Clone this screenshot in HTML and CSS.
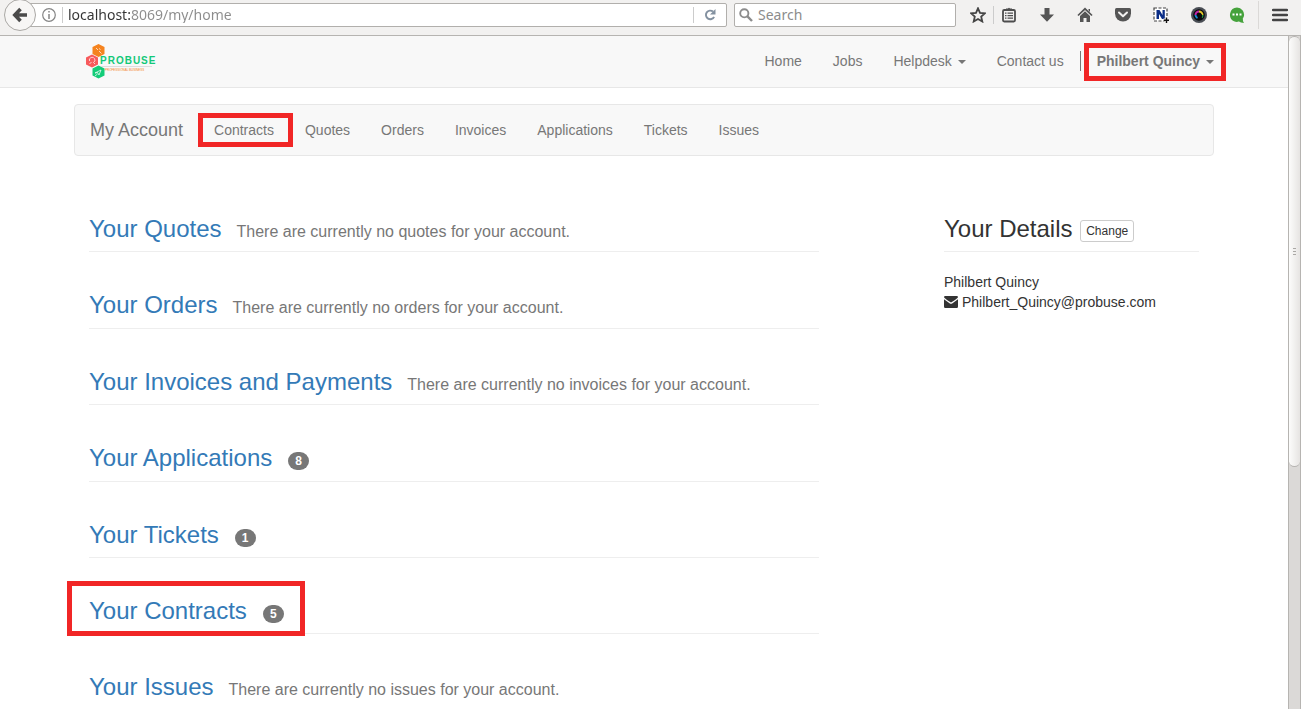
FILE: index.html
```html
<!DOCTYPE html>
<html lang="en">
<head>
<meta charset="utf-8">
<title>My Account</title>
<link rel="stylesheet" href="styles.css">
</head>
<body>
<div class="toolbar">
  <button class="back" type="button" aria-label="Back">
    <svg width="16" height="16" viewBox="0 0 16 16"><path d="M8.500 2 2.800 8l5.700 6M3.500 8H15" fill="none" stroke="#4a4a4a" stroke-width="3.600"/></svg>
  </button>
  <div class="urlbar">
    <svg class="info" width="14" height="14" viewBox="0 0 14 14"><circle cx="7" cy="7" r="6.300" fill="none" stroke="#858585" stroke-width="1.200"/><path d="M7 6v5M7 3v1.600" stroke="#858585" stroke-width="1.500"/></svg>
    <input class="url" type="text" value="localhost:8069/my/home" aria-label="Address">
    <button class="reload" type="button" aria-label="Reload">
      <svg width="12" height="12" viewBox="0 0 12 12"><path d="M9 2.600A4.300 4.300 0 1 0 10.100 7.800" fill="none" stroke="#8391a0" stroke-width="1.900"/><path d="M11.500 0v5.500H6z" fill="#8391a0"/></svg>
    </button>
  </div>
  <div class="searchbar">
    <svg width="14" height="14" viewBox="0 0 14 14"><circle cx="5.300" cy="5.300" r="4.100" fill="none" stroke="#8c8c8c" stroke-width="1.900"/><path d="m8.200 8.200 4.800 4.800" stroke="#8c8c8c" stroke-width="2.400"/></svg>
    <input class="search" type="text" placeholder="Search" aria-label="Search">
  </div>
  <div class="tools">
    <button class="tool" type="button" aria-label="Bookmark">
      <svg width="16" height="16" viewBox="0 0 16 16"><path d="m8 1.300 2 4.500 4.900.5-3.700 3.300 1.100 4.900L8 12l-4.300 2.500 1.100-4.900L1.100 6.300 6 5.800z" fill="none" stroke="#444" stroke-width="1.800"/></svg>
    </button>
    <span class="rule"></span>
    <div class="addons">
      <button class="tool" type="button" aria-label="Library">
        <svg width="16" height="16" viewBox="0 0 16 16"><rect x="2" y="3" width="12" height="11.500" rx="1.200" fill="none" stroke="#4d4d4d" stroke-width="1.800"/><path d="M5 3V1.600h2Q8 0 9 1.600h2V3z" fill="#4d4d4d"/><path d="M4 6.200h1.500m1 0H12M4 8.700h1.500m1 0H12M4 11.200h1.500m1 0H12" stroke="#4d4d4d" stroke-width="1.200"/></svg>
      </button>
      <button class="tool" type="button" aria-label="Downloads">
        <svg width="16" height="16" viewBox="0 0 16 16"><path d="M5.500 1h5v6.500H15L8 14.800 1 7.500h4.500z" fill="#555"/></svg>
      </button>
      <button class="tool" type="button" aria-label="Home page">
        <svg width="16" height="16" viewBox="0 0 16 16"><path d="M1 8.500 8 1.800l7 6.700" fill="none" stroke="#555" stroke-width="1.700"/><path d="M3 9l5-4.700L13 9v6H9.500v-4h-3v4H3zM11.500 2H13v3l-1.500-1.500z" fill="#555"/></svg>
      </button>
      <button class="tool" type="button" aria-label="Pocket">
        <svg width="16" height="16" viewBox="0 0 16 16"><path d="M1.500 1h13Q16 1 16 2.500v4a8 8 0 0 1-16 0v-4Q0 1 1.500 1z" fill="#555"/><path d="m4 5.500 4 3.800 4-3.800" fill="none" stroke="#f2f1f0" stroke-width="2" stroke-linecap="round" stroke-linejoin="round"/></svg>
      </button>
      <button class="tool" type="button" aria-label="Nimbus capture">
        <svg width="16" height="16" viewBox="0 0 16 16"><rect x="1" y="1" width="13" height="13" fill="#fff" stroke="#444" stroke-width="1.200" stroke-dasharray="3 1.500"/><path d="M3.500 12V3h3l3 5V3h2.300v9H9L6 7v5z" fill="#0b2d86"/><path d="M13.500 10v6M10.500 13h6" stroke="#f2f1f0" stroke-width="3"/><path d="M13.500 10.500V16M10.800 13.200H16" stroke="#111" stroke-width="1.400"/></svg>
      </button>
      <button class="tool" type="button" aria-label="Screen recorder">
        <svg width="16" height="16" viewBox="0 0 16 16"><circle cx="8" cy="8" r="8" fill="#4a4e55"/><circle cx="8" cy="8" r="5.800" fill="#08080c"/><path d="M4.500 8A3.500 3.500 0 0 1 8 4.500" fill="none" stroke="#c326a9" stroke-width="2"/><path d="M8 4.500A3.500 3.500 0 0 1 11.500 8" fill="none" stroke="#e2c42b" stroke-width="2"/><path d="M11.500 8a3.500 3.500 0 0 1-1 2.500" fill="none" stroke="#29a84a" stroke-width="2"/><path d="M6.500 11A3.500 3.500 0 0 1 4.500 8" fill="none" stroke="#168bd6" stroke-width="2"/><circle cx="9" cy="9" r="2.300" fill="#08080c"/></svg>
      </button>
      <button class="tool" type="button" aria-label="Chat">
        <svg width="16" height="16" viewBox="0 0 16 16"><path d="M8 .5a7.200 7.200 0 1 1-3 13.800 7.300 7.300 0 0 1 3-13.800zM9 14l5-2q-.5 2 1 4-3 0-6-2z" fill="#45a23c"/><path d="M3.500 6.500h2v2h-2zm3.500 0h2v2H7zm3.500 0h2v2h-2z" fill="#fff"/></svg>
      </button>
    </div>
    <span class="rule rule-tall"></span>
    <button class="tool" type="button" aria-label="Menu">
      <svg width="16" height="14" viewBox="0 0 16 14"><path d="M1 2h14M1 7h14M1 12h14" stroke="#444" stroke-width="2.500" stroke-linecap="round"/></svg>
    </button>
  </div>
</div>

<div class="viewport">
  <div class="page">
    <header class="site-header">
      <div class="container header-row">
        <a class="logo" href="#" aria-label="Probuse">
          <svg width="72" height="38" viewBox="0 0 72 38">
            <path d="m13.500 1 6 3v7l-6 3-6-3V4z" fill="#f5831f"/>
            <path d="m7 11.500 6 3v7l-6 3-6-3v-7z" fill="#f75a5c"/>
            <path d="m13.500 22.500 6 3v7l-6 3-6-3v-7z" fill="#13cc78"/>
            <path d="m11 5 2 2m1 1 2.500 2.500M14 5.500l1.500 1M4.500 21l2-2m-2-1a2.800 2.800 0 1 1 4 1.500L10 21M10 30l6-3-2 5-1.500-2.500zm0 3 2.500-2" fill="none" stroke="#fff" stroke-opacity=".7"/>
            <text class="logo-name" x="15" y="21">PROBUSE</text>
            <path d="M16 23.500h51" stroke="#ddd"/>
            <text class="logo-tag" x="20" y="28">PROFESSIONAL BUSINESS</text>
          </svg>
        </a>
        <nav class="site-nav">
          <a href="#">Home</a>
          <a href="#">Jobs</a>
          <a href="#">Helpdesk <span class="caret"></span></a>
          <a href="#">Contact us</a>
          <span class="divider"></span>
          <a class="marked user" href="#">Philbert Quincy <span class="caret"></span></a>
        </nav>
      </div>
    </header>

    <main class="container">
      <nav class="account-nav">
        <a class="brand" href="#">My Account</a>
        <a class="marked current" href="#">Contracts</a>
        <a href="#">Quotes</a>
        <a href="#">Orders</a>
        <a href="#">Invoices</a>
        <a href="#">Applications</a>
        <a href="#">Tickets</a>
        <a href="#">Issues</a>
      </nav>
      <div class="columns">
        <div class="records">
          <h3 class="section"><a href="#">Your Quotes</a><small>There are currently no quotes for your account.</small></h3>
          <h3 class="section"><a href="#">Your Orders</a><small>There are currently no orders for your account.</small></h3>
          <h3 class="section"><a href="#">Your Invoices and Payments</a><small>There are currently no invoices for your account.</small></h3>
          <h3 class="section"><a href="#">Your Applications</a><span class="badge">8</span></h3>
          <h3 class="section"><a href="#">Your Tickets</a><span class="badge">1</span></h3>
          <h3 class="section"><span class="marked summary"><a href="#">Your Contracts</a><span class="badge">5</span></span></h3>
          <h3 class="section"><a href="#">Your Issues</a><small>There are currently no issues for your account.</small></h3>
        </div>
        <aside class="details">
          <h3 class="section details-title">Your Details <button class="change" type="button">Change</button></h3>
          <address class="contact">
            <span>Philbert Quincy</span>
            <span class="mail"><svg width="14" height="12" viewBox="0 0 14 12"><path d="M0 1.200Q0 0 1.200 0h11.600Q14 0 14 1.200 13.500 2.500 7 6.500 .5 2.500 0 1.200z" fill="#333"/><path d="M0 3.200 5.500 7.200q1.500 1 3 0L14 3.200v7.300q0 1.500-1.200 1.500H1.200Q0 12 0 10.500z" fill="#333"/></svg>Philbert_Quincy@probuse.com</span>
          </address>
        </aside>
      </div>
    </main>
  </div>
  <div class="scrollbar"><div class="thumb"><span></span><span></span><span></span></div></div>
</div>
</body>
</html>
```
FILE: styles.css
```css
* { box-sizing: border-box; }

body {
  margin: 0;
  height: 100vh;
  display: flex;
  flex-direction: column;
  overflow: hidden;
  background: #fff;
  color: #333;
  font: 14px/20px "Liberation Sans", Arial, sans-serif;
}

a { color: #337ab7; text-decoration: none; }
button { padding: 0; border: 0; background: none; font: inherit; color: inherit; }
svg { display: block; flex: none; }

/* Browser toolbar */
.toolbar {
  display: flex;
  align-items: center;
  height: 36px;
  padding: 0 6px 6px 4px;
  border-bottom: 1px solid #b6b4b1;
  background: #f2f1f0;
}
.back {
  position: relative;
  z-index: 1;
  display: grid;
  place-items: center;
  flex: none;
  width: 32px;
  height: 32px;
  border: 1px solid #aaa8a5;
  border-radius: 50%;
  background: #f7f6f5;
}
.urlbar, .searchbar {
  display: flex;
  align-items: center;
  height: 24px;
  border: 1px solid #b1afac;
  border-radius: 2px;
  background: #fff;
}
.urlbar { flex: 1; margin-left: -8px; padding-left: 13px; }
.url, .search {
  min-width: 0;
  padding: 0;
  border: 0;
  outline: 0;
  background: none;
  font: 14px/20px "Noto Sans", "Open Sans", sans-serif;
}
.url {
  flex: 1;
  margin-left: 6px;
  padding-left: 5px;
  border-left: 1px solid #ccc;
  height: 16px;
  background: linear-gradient(90deg, #333 67px, #8c8c8c 67px) text;
  color: transparent;
}
.reload {
  display: grid;
  place-items: center;
  width: 33px;
  height: 16px;
  border-left: 1px solid #ccc;
}
.searchbar { width: 222px; margin-left: 7px; padding-left: 4px; gap: 5px; }
.search { flex: 1; }
.search::placeholder { color: #8c8c8c; opacity: 1; }
.tools { display: flex; align-items: center; margin-left: 7px; }
.addons { display: flex; gap: 8px; }
.tool { display: grid; place-items: center; width: 30px; height: 24px; }
.rule { width: 1px; height: 18px; background: #ccc; }
.rule-tall { height: 28px; margin: 0 6px; background: #dbd9d7; }

/* Page area */
.viewport { flex: 1; display: flex; min-height: 0; }
.page { flex: 1; min-width: 0; overflow: hidden; }
.container { max-width: 1170px; margin: 0 auto; padding: 0 15px; }

.site-header { border-bottom: 1px solid #e7e7e7; background: #f8f8f8; }
.header-row { display: flex; justify-content: space-between; padding-right: 0; }
.logo { padding: 7px 11px 6px; }
.logo-name { font: bold 10px "Liberation Sans", sans-serif; letter-spacing: 1px; fill: #13c878; }
.logo-tag { font: 3px "Liberation Sans", sans-serif; fill: #f5831f; }

.site-nav { display: flex; align-items: flex-start; gap: 1px; }
.site-nav a, .account-nav a { padding: 15px; color: #777; }
.site-nav .user { font-weight: bold; }
.divider { width: 1px; height: 20px; margin-top: 15px; background: #777; }
.caret {
  display: inline-block;
  margin-left: 2px;
  vertical-align: middle;
  border: 4px solid transparent;
  border-top-color: currentColor;
  border-bottom: 0;
}

.account-nav {
  display: flex;
  align-items: center;
  gap: 1px;
  margin: 16px 0 20px;
  border: 1px solid #e7e7e7;
  border-radius: 4px;
  background: #f8f8f8;
}
.account-nav .brand { font-size: 18px; }

/* Red frames over highlighted items */
.marked { position: relative; }
.marked::after {
  content: "";
  position: absolute;
  border: 5px solid #f12626;
  pointer-events: none;
}
.current::after { inset: 8px -4px 8px -1px; }
.user::after { inset: 7px 3px 5px 2px; }
.summary::after { inset: -17px -21px -12px -22px; }

/* Account columns */
.columns { display: grid; grid-template-columns: 8fr 1fr 3fr; }
.records, .details { padding: 0 15px; }
.details { grid-column: 3; }
.section {
  display: flow-root;
  margin: 40px 0;
  padding-bottom: 9px;
  border-bottom: 1px solid #eee;
  font-size: 24px;
  font-weight: normal;
  line-height: 1.1;
  white-space: nowrap;
}
.section small { margin-left: 15px; font-size: 16px; line-height: 1; color: #777; }
.summary { display: inline-block; }
.badge {
  display: inline-block;
  margin-left: 16px;
  padding: 3px 7px;
  border-radius: 10px;
  background: #777;
  color: #fff;
  font-size: 12px;
  font-weight: bold;
  line-height: 12px;
  vertical-align: 1px;
}
.details-title { margin-bottom: 20px; }
.change {
  height: 22px;
  margin-left: 1px;
  padding: 0 5px;
  border: 1px solid #ccc;
  border-radius: 3px;
  background: #fff;
  font-size: 12px;
  line-height: 18px;
  vertical-align: middle;
}
.contact { display: flex; flex-direction: column; font-style: normal; }
.mail { display: flex; align-items: center; gap: 4px; }

/* Scrollbar */
.scrollbar {
  width: 13px;
  border: 1px solid #b6b4b1;
  border-width: 0 1px;
  background: #dbd9d7;
}
.thumb {
  display: flex;
  flex-direction: column;
  align-items: center;
  justify-content: center;
  gap: 2px;
  height: 64%;
  border: 1px solid #b6b4b1;
  border-width: 1px 0;
  border-radius: 6px;
  background: linear-gradient(90deg, #fcfcfb, #e6e4e2);
}
.thumb span { width: 3px; height: 1px; background: #aaa8a5; }
```
